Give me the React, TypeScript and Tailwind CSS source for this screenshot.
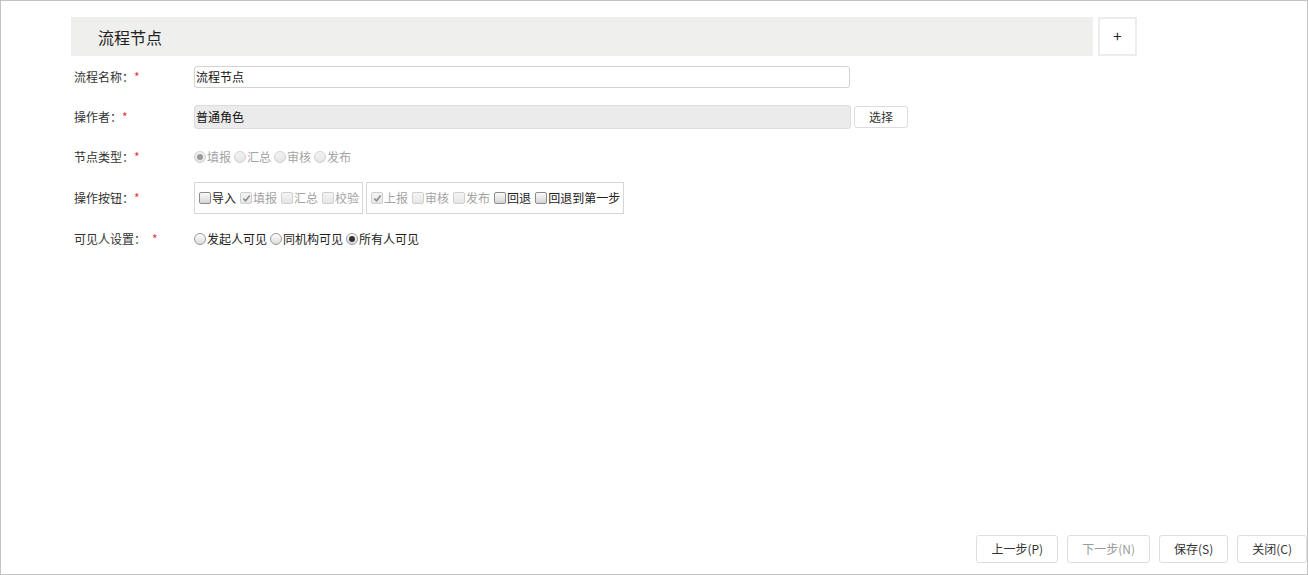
import type { ReactNode } from 'react'

const font = { fontFamily: '"Noto Sans CJK SC", "Microsoft YaHei", sans-serif' }

function Radio({ label, checked, disabled }: { label: string; checked?: boolean; disabled?: boolean }) {
  return (
    <span className="mr-[3px] inline-flex items-center">
      <span
        className={
          'relative mr-[1px] inline-flex h-[12px] w-[12px] items-center justify-center rounded-full border ' +
          (disabled
            ? 'border-[#cfcfcf] bg-gradient-to-b from-[#f4f4f4] to-[#e4e4e4]'
            : 'border-[#9a9a9a] bg-gradient-to-b from-[#fdfdfd] to-[#dcdcdc]')
        }
      >
        {checked && (
          <span
            className={'h-[6px] w-[6px] rounded-full ' + (disabled ? 'bg-[#9a9a9a]' : 'bg-[#333]')}
          />
        )}
      </span>
      <span className={disabled ? 'text-[#a3a3a3]' : 'text-[#222]'}>{label}</span>
    </span>
  )
}

function Checkbox({ label, checked, disabled }: { label: string; checked?: boolean; disabled?: boolean }) {
  return (
    <span className="mr-[4px] inline-flex items-center last:mr-[3px]">
      <span
        className={
          'mr-[1px] inline-flex h-[12px] w-[12px] items-center justify-center rounded-[2px] border ' +
          (disabled
            ? 'border-[#cfcfcf] bg-gradient-to-b from-[#f4f4f4] to-[#e6e6e6]'
            : 'border-[#8c8c8c] bg-gradient-to-b from-[#fafafa] to-[#d6d6d6]')
        }
      >
        {checked && (
          <svg viewBox="0 0 10 10" className="h-[9px] w-[9px]">
            <path d="M1.5 5.2 L4 7.6 L8.6 1.8" fill="none" stroke="#8d8d8d" strokeWidth="1.8" />
          </svg>
        )}
      </span>
      <span className={disabled ? 'text-[#a3a3a3]' : 'text-[#222]'}>{label}</span>
    </span>
  )
}

function Row({ label, gap, children, className = 'h-[40px]' }: { label: string; gap?: boolean; children: ReactNode; className?: string }) {
  return (
    <div className={'flex items-center ' + className}>
      <div className="w-[120px] shrink-0 text-[#333]">
        {label}：{gap && <span className="inline-block w-[6px]" />}
        <span className="text-[#e53935]">*</span>
      </div>
      <div className="flex items-center">{children}</div>
    </div>
  )
}

function FooterButton({ children, disabled }: { children: ReactNode; disabled?: boolean }) {
  return (
    <button
      type="button"
      className={
        'h-[28px] rounded-[3px] border border-[#dedede] bg-white px-[14px] text-[12px] ' +
        (disabled ? 'text-[#9a9a9a]' : 'text-[#333]')
      }
    >
      {children}
    </button>
  )
}

function App() {
  return (
    <div
      style={font}
      className="flex h-[575px] w-[1308px] flex-col border border-[#c3c3c3] bg-white text-[12px] text-[#333]"
    >
      <div className="flex gap-[5px] pt-[16px] pl-[70px]">
        <div className="flex h-[39px] w-[1022px] items-center bg-[#efefed] pl-[27px] text-[16px] text-[#222]">
          流程节点
        </div>
        <div className="flex h-[39px] w-[39px] items-center justify-center border-2 border-[#ececec] text-[15px] text-[#222]">
          +
        </div>
      </div>

      <div className="pt-[1px] pl-[73px]">
        <Row label="流程名称">
          <div className="flex h-[22px] w-[656px] items-center rounded-[3px] border border-[#d2d2d2] pl-[1px] text-[#111]">
            流程节点
          </div>
        </Row>
        <Row label="操作者">
          <div className="flex h-[24px] w-[657px] items-center rounded-[3px] border border-[#dcdcdc] bg-[#ebebeb] pl-[1px] text-[#111]">
            普通角色
          </div>
          <button
            type="button"
            className="ml-[3px] h-[22px] w-[54px] rounded-[3px] border border-[#dcdcdc] bg-white text-[12px] text-[#333]"
          >
            选择
          </button>
        </Row>
        <Row label="节点类型">
          <Radio label="填报" checked disabled />
          <Radio label="汇总" disabled />
          <Radio label="审核" disabled />
          <Radio label="发布" disabled />
        </Row>
        <Row label="操作按钮" className="h-[42px]">
          <div className="flex h-[32px] items-center border border-[#d6d6d6] pl-[4px]">
            <Checkbox label="导入" />
            <Checkbox label="填报" checked disabled />
            <Checkbox label="汇总" disabled />
            <Checkbox label="校验" disabled />
          </div>
          <div className="ml-[3px] flex h-[32px] items-center border border-[#d6d6d6] pl-[4px]">
            <Checkbox label="上报" checked disabled />
            <Checkbox label="审核" disabled />
            <Checkbox label="发布" disabled />
            <Checkbox label="回退" />
            <Checkbox label="回退到第一步" />
          </div>
        </Row>
        <Row label="可见人设置" gap>
          <Radio label="发起人可见" />
          <Radio label="同机构可见" />
          <Radio label="所有人可见" checked />
        </Row>
      </div>

      <div className="mt-auto flex justify-end gap-[9px] pb-[11px]">
        <FooterButton>上一步(P)</FooterButton>
        <FooterButton disabled>下一步(N)</FooterButton>
        <FooterButton>保存(S)</FooterButton>
        <FooterButton>关闭(C)</FooterButton>
      </div>
    </div>
  )
}

export default App
